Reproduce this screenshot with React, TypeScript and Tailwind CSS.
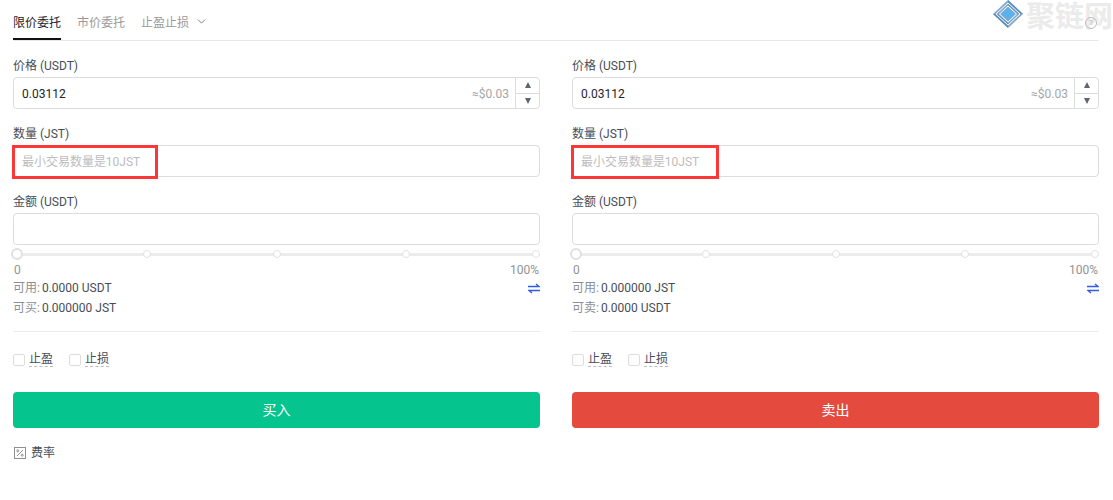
import React from "react";
import { ChevronDown } from "lucide-react";

const font = "font-['Roboto','Noto_Sans_CJK_SC',sans-serif]";

const Label = ({ text }: { text: string }) => (
  <div className="h-[16px] text-[12px] leading-[16px] text-[#474d57] mb-[4px] pt-px">{text}</div>
);

const PriceInput = () => (
  <div className="h-[32px] border border-[#dcdcdc] rounded-[4px] flex items-center text-[12px]">
    <span className="pl-[8px] pt-px flex-1 text-[#1e2329]">0.03112</span>
    <span className="text-[#a5a5a5] pr-[6px] pt-px">≈$0.03</span>
    <div className="w-[24px] h-full border-l border-[#dcdcdc] flex flex-col">
      <div className="flex-1 flex items-center justify-center border-b border-[#dcdcdc]">
        <div className="w-0 h-0 border-x-[3.5px] border-x-transparent border-b-[6px] border-b-[#5e6673]" />
      </div>
      <div className="flex-1 flex items-center justify-center">
        <div className="w-0 h-0 border-x-[3.5px] border-x-transparent border-t-[6px] border-t-[#5e6673]" />
      </div>
    </div>
  </div>
);

const Dot = () => (
  <div className="w-[12px] flex justify-center">
    <div className="w-[8px] h-[8px] rounded-full bg-white border border-[#e2e2e2]" />
  </div>
);

const Slider = () => (
  <div className="relative h-[14px] mt-[2px] -mx-[2px] flex items-center justify-between">
    <div className="absolute left-[2px] right-[2px] top-[6px] h-[3px] bg-[#ececec]" />
    <div className="relative w-[12px] h-[12px] rounded-full bg-white border-2 border-[#e0e0e0]" />
    <div className="relative"><Dot /></div>
    <div className="relative"><Dot /></div>
    <div className="relative"><Dot /></div>
    <div className="relative"><Dot /></div>
  </div>
);

const Swap = () => (
  <svg width="12" height="11" viewBox="0 0 12 11" fill="none" stroke="#2f5be7" strokeWidth="1.3">
    <path d="M0 3.5h11L8 1" />
    <path d="M12 7.5H1L4 10" />
  </svg>
);

const Check = ({ text }: { text: string }) => (
  <div className="flex items-center gap-[4px]">
    <div className="w-[12px] h-[12px] border border-[#dcdcdc] rounded-[2px] bg-white" />
    <span className="text-[12px] leading-[14px] text-[#474d57] border-b border-dashed border-[#b7bdc6]">{text}</span>
  </div>
);

const Panel = ({
  avail,
  other,
  otherLabel,
  btn,
  btnColor,
  boxWidth,
}: {
  avail: string;
  other: string;
  otherLabel: string;
  btn: string;
  btnColor: string;
  boxWidth: string;
}) => (
  <div className="w-[527px] relative">
    <Label text="价格 (USDT)" />
    <PriceInput />
    <div className="h-[16px]" />
    <Label text="数量 (JST)" />
    <div className="h-[32px] border border-[#dcdcdc] rounded-[4px] flex items-center pl-[8px] pt-px text-[12px] tracking-[-0.02px] text-[#bcbcbc]">
      最小交易数量是10JST
    </div>
    {/* red highlight */}
    <div className={`absolute left-[-1px] top-[88px] h-[34px] border-[3px] border-[#fb3737] ${boxWidth}`} />
    <div className="h-[16px]" />
    <Label text="金额 (USDT)" />
    <div className="h-[32px] border border-[#dcdcdc] rounded-[4px]" />
    <Slider />
    <div className="flex justify-between text-[12px] leading-[16px] text-[#929292] mt-[1px] pl-[1px] pr-[1px]">
      <span>0</span>
      <span>100%</span>
    </div>
    <div className="flex justify-between items-center text-[12px] leading-[16px] mt-[2px]">
      <span>
        <span className="text-[#8a8f97] mr-[2px]">可用:</span>
        <span className="text-[#474d57]">{avail}</span>
      </span>
      <Swap />
    </div>
    <div className="text-[12px] leading-[16px] mt-[4px]">
      <span className="text-[#8a8f97] mr-[2px]">{otherLabel}:</span>
      <span className="text-[#474d57]">{other}</span>
    </div>
    <div className="h-px bg-[#ebebeb] mt-[15px]" />
    <div className="flex gap-[16px] mt-[20px]">
      <Check text="止盈" />
      <Check text="止损" />
    </div>
    <button className={`w-full h-[36px] rounded-[4px] text-white text-[14px] mt-[25px] ${btnColor}`}>{btn}</button>
  </div>
);

const WatermarkLogo = () => (
  <svg width="30" height="28" viewBox="0 0 30 28">
    <path d="M15 0L30 14L15 28L0 14Z" fill="#7fa9d0" />
    <path d="M15 0L30 14L25 14L15 5Z" fill="#5e90bf" />
    <path d="M0 14L15 28L15 23L5 14Z" fill="#5e90bf" />
    <path d="M15 8.5L21 14L15 19.5L9 14Z" fill="#55b4f0" />
    <path
      d="M15 6L23.5 14L15 22L6.5 14ZM15 3L27 14M15 3L3 14M3 14L15 25M27 14L15 25M11 2L4 9M19 2L26 9M11 26L4 19M19 26L26 19"
      stroke="#fff"
      strokeWidth="1"
      fill="none"
    />
  </svg>
);

export default function App() {
  return (
    <div className={`relative w-[1113px] h-[500px] bg-white overflow-hidden ${font}`}>
      <div className="mx-[14px] ml-[13px] h-[41px] border-b border-[#e9e9e9] flex text-[12px]">
        <div className="h-[40px] w-[48px] pt-[15px] leading-[16px] border-b-2 border-[#111] text-[#1e2329]">限价委托</div>
        <div className="ml-[16px] pt-[15px] leading-[16px] text-[#9a9a9a]">市价委托</div>
        <div className="ml-[16px] pt-[15px] leading-[16px] text-[#9a9a9a] flex items-start gap-[6px] h-[32px]">
          止盈止损
          <ChevronDown size={13} strokeWidth={1.5} className="text-[#5e6673]" />
        </div>
      </div>

      <div className="flex gap-[32px] pl-[13px] pt-[16px]">
        <Panel avail="0.0000 USDT" otherLabel="可买" other="0.000000 JST" btn="买入" btnColor="bg-[#05c48e]" boxWidth="w-[146px]" />
        <Panel avail="0.000000 JST" otherLabel="可卖" other="0.0000 USDT" btn="卖出" btnColor="bg-[#e54a3f]" boxWidth="w-[148px]" />
      </div>

      <div className="flex items-center gap-[5px] pl-[14px] mt-[17px] text-[12px] leading-[16px] text-[#474d57]">
        <svg width="12" height="12" viewBox="0 0 12 12" fill="none" stroke="#8f8f8f">
          <rect x="0.5" y="0.5" width="11" height="11" />
          <path d="M3 9l6-6" />
          <circle cx="3.8" cy="3.8" r="1" />
          <circle cx="8.2" cy="8.2" r="1" />
        </svg>
        费率
      </div>

      {/* watermark */}
      <div className="absolute left-[993px] top-0 flex items-center gap-[3px] pointer-events-none">
        <WatermarkLogo />
        <span className="font-['Noto_Sans_CJK_SC'] font-bold text-[29px] leading-[28px] text-[#ebebeb] whitespace-nowrap">聚链网</span>
      </div>
      <div className="absolute left-[1085px] top-[17px] w-[12px] h-[12px] rounded-full border border-[#b9b9b9] text-[8px] leading-[10px] text-center text-[#b0b0b0]">?</div>
    </div>
  );
}
